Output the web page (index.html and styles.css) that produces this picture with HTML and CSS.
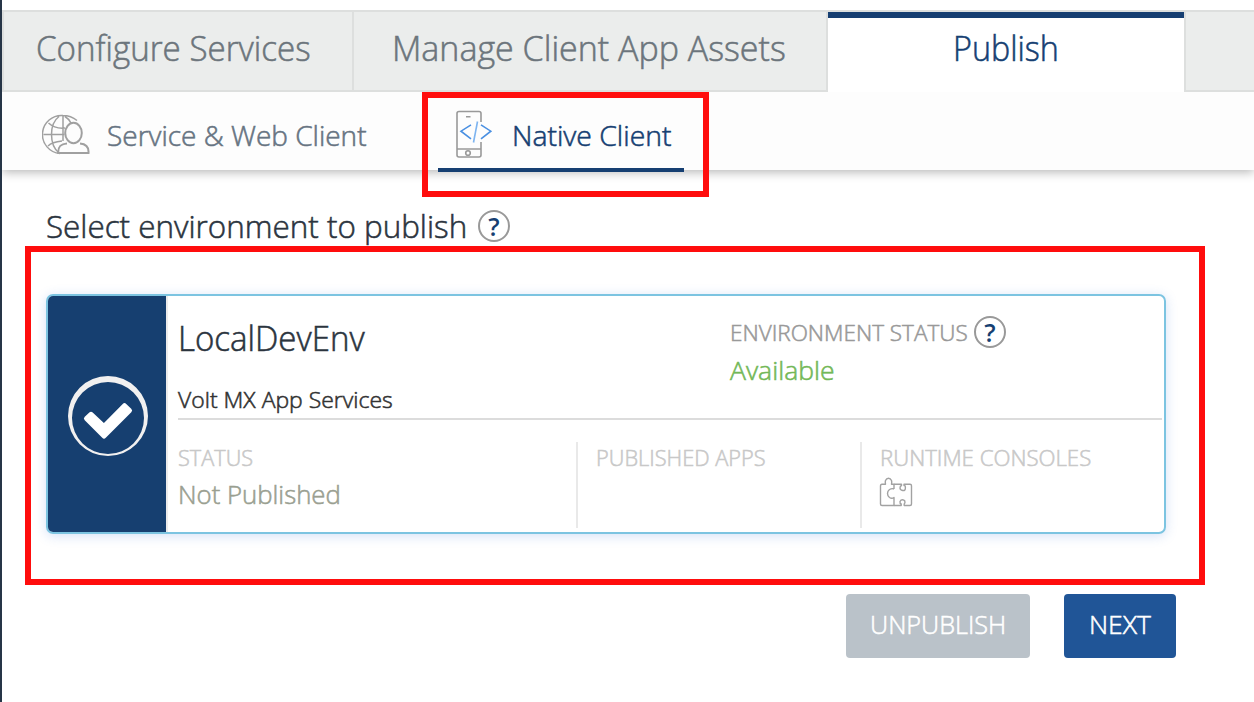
FILE: index.html
```html
<!DOCTYPE html>
<html lang="en">
<head>
<meta charset="utf-8">
<title>Publish</title>
<link rel="stylesheet" href="styles.css">
</head>
<body>
<div class="app">
  <nav class="tabs">
    <a class="tab tab-configure"><span class="label">Configure Services</span></a>
    <a class="tab tab-assets"><span class="label">Manage Client App Assets</span></a>
    <a class="tab tab-publish active"><span class="label">Publish</span></a>
    <span class="tab tab-rest"></span>
  </nav>
  <nav class="subnav">
    <a class="sub sub-web">
      <svg class="icon-web" width="48" height="42" viewBox="0 0 48 42" fill="none" stroke="#a0a0a0" stroke-width="1.5">
        <path d="M18 39.5A19 19 0 0 1 21 1.500Q29 1.500 35 6.500M1.500 20.500H22.500M21 2V27M17 2.500C7 10 7 31 17 39M23 2.500Q27 5 29 9M6.500 9Q13 15 23 14M6 32Q10 28 20 27"/>
        <ellipse cx="31.500" cy="19" rx="8.300" ry="10.200" stroke-width="2"/>
        <path stroke-width="2" d="M25 29.500C18 30 16 33 16.200 39H46.500C47 33 44 30 38 29.500"/>
      </svg>
      <span class="label">Service &amp; Web Client</span>
    </a>
    <a class="sub sub-native active">
      <svg class="icon-native" width="38" height="48" viewBox="0 0 38 48" fill="none" stroke="#999" stroke-width="1.600">
        <path d="M26 12V3.500Q26 1.500 24 1.500H4Q2 1.500 2 3.500V45Q2 47 4 47H24Q26 47 26 45V32M2 39H26M11 6.800H15.500"/>
        <circle cx="13" cy="43" r="2.300"/>
        <path stroke="#4a90e2" d="M16 14.800 6 21.200 16 28.800M26 14.800 35.800 21.200 26 28.800"/>
        <path stroke="#7db4f0" d="M22.500 11.500 18.500 32.500"/>
      </svg>
      <span class="label">Native Client</span>
    </a>
  </nav>
  <main class="content">
    <h1 class="heading"><span class="label">Select environment to publish</span><span class="help">?</span></h1>
    <section class="card">
      <div class="selector">
        <svg width="80" height="80" viewBox="0 0 80 80">
          <path fill="#f1f0f0" fill-rule="evenodd" d="M40 0A40 40 0 1 1 40 80 40 40 0 1 1 40 0ZM40 6A36 36 0 1 0 40 78 36 36 0 1 0 40 6Z"/>
          <path fill="#fff" stroke="#fff" stroke-width="5" stroke-linejoin="round" d="M18.500 42.500 23 38.300 36 50.500 56.500 29.700 61.500 34.500 36 60Z"/>
        </svg>
      </div>
      <div class="details">
        <header class="card-head">
          <div class="env">
            <div class="env-name"><span class="label">LocalDevEnv</span></div>
            <div class="env-service"><span class="label">Volt MX App Services</span></div>
          </div>
          <div class="env-status">
            <div class="caption"><span class="label">ENVIRONMENT STATUS</span><span class="help">?</span></div>
            <div class="value available"><span class="label">Available</span></div>
          </div>
        </header>
        <div class="columns">
          <div class="col col-status">
            <div class="caption"><span class="label">STATUS</span></div>
            <div class="value"><span class="label">Not Published</span></div>
          </div>
          <div class="col col-apps">
            <div class="caption"><span class="label">PUBLISHED APPS</span></div>
          </div>
          <div class="col col-consoles">
            <div class="caption"><span class="label">RUNTIME CONSOLES</span></div>
            <svg class="icon-puzzle" width="34" height="30" viewBox="0 0 34 30" fill="none" stroke="#a2a2a2" stroke-width="1.400" stroke-linejoin="round">
              <path d="M15 12V7.200H12.500Q13 5 12.500 3.500Q11.500 1.200 9.500 1.200T6.500 3.500Q6 5 6.500 7.200H3Q1.500 7.200 1.500 9V27Q1.500 28.500 3 28.500H15V20.500Q13 22 10.500 20.500 8.500 19 8.500 16.500T10.500 12.500Q13 11 15 12"/>
              <path d="M15 7.200H22.500V8.500Q21 9 21 11T23.700 13.500 26.400 11 25 8.500V7.200H31Q32.500 7.200 32.500 8.700V27Q32.500 28.500 31 28.500H25.200V27Q26.400 26 25.800 24 25 22.800 23.500 22.800 21.800 22.800 21 24.500 20.700 26.500 22.200 27V28.500H15"/>
            </svg>
          </div>
        </div>
      </div>
    </section>
    <div class="actions">
      <button class="btn btn-unpublish"><span class="label">UNPUBLISH</span></button>
      <button class="btn btn-next"><span class="label">NEXT</span></button>
    </div>
  </main>
  <div class="mark mark-tab"></div>
  <div class="mark mark-card"></div>
</div>
</body>
</html>
```
FILE: styles.css
```css
* { box-sizing: border-box; }
body {
  margin: 0;
  background: #fff;
  font-family: "Open Sans", "Noto Sans", sans-serif;
  font-stretch: 90%;
  font-weight: 350;
}
.app {
  position: relative;
  width: 1254px;
  height: 702px;
  overflow: hidden;
  border-left: 2px solid #263547;
  padding-top: 10px;
}
.label {
  display: inline-block;
  white-space: nowrap;
  transform-origin: 0 50%;
  -webkit-text-stroke: .55px currentColor;
}

.tabs { display: flex; height: 82px; }
.tab {
  background: #ebedec;
  border: solid #dddfde;
  border-width: 2px 2px 2px 0;
  color: #6c757c;
  font-size: 34px;
  line-height: 73px;
}
.tab-configure { width: 352px; border-left-width: 2px; padding-left: 32px; }
.tab-configure .label { transform: scaleX(.974); }
.tab-assets { width: 474px; padding-left: 38px; }
.tab-publish {
  width: 358px;
  padding-left: 124.500px;
  background: #fff;
  border-bottom: 0;
  color: #163f72;
  box-shadow: inset 0 6px 0 #163f72;
}
.tab-publish .label { transform: scaleX(.95); }
.tab-rest { flex: 1; border-right: 0; }

.subnav {
  display: flex;
  height: 78px;
  background: #fdfdfd;
  box-shadow: 0 2px 10px rgba(0, 0, 0, .3);
  font-size: 27.500px;
  line-height: 87px;
  color: #677482;
}
.sub { display: flex; height: 80px; }
.sub-web { width: 436px; padding-left: 40px; }
.sub-web .label { transform: scaleX(1.018); }
.icon-web { margin: 22px 16.500px 0 0; }
.sub-native { width: 246px; padding-left: 16.500px; color: #163f72; border-bottom: 4px solid #163f72; }
.sub-native .label { transform: scaleX(1.03); }
.icon-native { margin: 18px 19.500px 0 0; }

.content { padding: 31px 0 0 44px; }
.heading {
  display: flex;
  align-items: center;
  margin: 0;
  height: 48px;
  font-size: 32px;
  font-weight: 350;
  color: #2b343e;
}
.heading .label { width: 432px; transform: scaleX(.981); }
.help {
  display: block;
  width: 32px;
  height: 32px;
  border: 2px solid #999;
  border-radius: 50%;
  font-size: 25px;
  font-weight: 600;
  line-height: 28px;
  text-align: center;
  color: #163f72;
}
.heading .help { margin-top: 2px; }

.card {
  display: flex;
  width: 1120px;
  height: 240px;
  margin-top: 45px;
  border: 2px solid #7cc4e1;
  border-radius: 7px;
  overflow: hidden;
  box-shadow: 0 2px 12px rgba(60, 120, 220, .22);
}
.selector {
  display: flex;
  align-items: center;
  justify-content: center;
  width: 120px;
  padding: 4px 0 0 2px;
  background: #163f70;
  border-right: 2px solid #ececec;
}
.details { flex: 1; padding: 0 2px 0 10px; }
.card-head { display: flex; height: 124px; border-bottom: 2px solid #dcdcdc; }
.env { width: 552px; }
.env-name { height: 82px; font-size: 34px; line-height: 84px; color: #2b343e; }
.env-name .label { transform: scaleX(.972); }
.env-service { font-size: 22.500px; line-height: 44px; color: #333; }
.env-service .label { transform: scaleX(1.02); }
.env-status { padding-top: 20px; }
.caption { display: flex; height: 32px; font-size: 22.500px; line-height: 33px; color: #c8c8c8; }
.env-status .caption { color: #999; }
.env-status .caption .label { width: 244px; transform: none; }
.value { font-size: 26px; line-height: 42px; color: #9a9f91; }
.value .label { transform: scaleX(.99); }
.available { color: #73b857; line-height: 45px; }
.available .label { transform: scaleX(1.02); }
.columns { display: flex; padding-top: 22px; }
.col { height: 86px; }
.col .caption { height: 31px; line-height: 31px; }
.col-status { width: 398px; }
.col-status .caption .label { transform: scaleX(.965); }
.col-apps { width: 284px; padding-left: 18px; border-left: 2px solid #e9e9e9; }
.col-apps .label { transform: scaleX(.967); }
.col-consoles { padding-left: 18px; border-left: 2px solid #e9e9e9; }
.col-consoles .label { transform: scaleX(.987); }
.icon-puzzle { display: block; margin: 4px 0 0 -1px; }

.actions { display: flex; gap: 34px; margin: 60px 0 0 800px; }
.btn {
  height: 64px;
  border: 0;
  border-radius: 4px;
  padding: 0 0 4px 24px;
  font: inherit;
  font-size: 26.500px;
  text-align: left;
  color: #fff;
}
.btn-unpublish { width: 184px; background: #bac2c9; }
.btn-unpublish .label { transform: scaleX(.952); }
.btn-next { width: 112px; padding-left: 25px; background: #205597; }

.mark { position: absolute; border: 6px solid #ff0d0d; }
.mark-tab { left: 420px; top: 92px; width: 287px; height: 105px; }
.mark-card { left: 23px; top: 246px; width: 1180px; height: 339px; }
```
